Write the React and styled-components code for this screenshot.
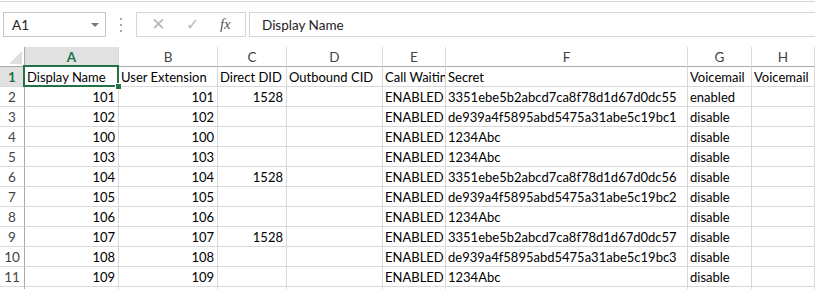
import React from 'react'
import styled, { createGlobalStyle } from 'styled-components'

const GlobalStyle = createGlobalStyle`
body {
  margin: 0;
  background: #ffffff;
  font-family: Lato, "Liberation Sans", Arial, sans-serif;
  overflow: hidden;
}
`

const Window = styled.div`
width: 815px;
height: 289px;
overflow: hidden;
background: #ffffff;
`

const FormulaRow = styled.div`
margin-top: 1px;
border-top: 1px solid #d5d5d5;
height: 46px;
display: flex;
align-items: flex-start;
padding-top: 10px;
box-sizing: border-box;
`

const NameBox = styled.div`
margin-left: 3px;
width: 103px;
height: 25px;
box-sizing: border-box;
border: 1px solid #c6c6c6;
display: flex;
align-items: center;
justify-content: space-between;
padding: 0 6px 0 8px;
font-size: 13.5px;
color: #222;
`

const DropArrow = styled.span`
width: 0;
height: 0;
border-left: 4px solid transparent;
border-right: 4px solid transparent;
border-top: 4px solid #777;
`

const Dots = styled.div`
width: 30px;
display: flex;
flex-direction: column;
align-items: center;
justify-content: center;
gap: 4px;
height: 25px;
`

const Dot = styled.span`
width: 2px;
height: 2px;
background: #a8a8a8;
`

const ButtonBox = styled.div`
width: 110px;
height: 25px;
box-sizing: border-box;
border: 1px solid #d5d5d5;
display: flex;
align-items: center;
justify-content: space-around;
padding: 0 4px;
`

const ToolIcon = styled.span`
font-size: ${p => p.$size || 15}px;
color: ${p => p.$color || '#b8b8b8'};
font-family: ${p => p.$serif ? '"Liberation Serif", serif' : '"DejaVu Sans", sans-serif'};
font-style: ${p => p.$serif ? 'italic' : 'normal'};
line-height: 1;
`

const FormulaInput = styled.div`
margin-left: 3px;
flex: 1;
height: 25px;
box-sizing: border-box;
border: 1px solid #d5d5d5;
border-right: none;
display: flex;
align-items: center;
padding-left: 12px;
font-size: 13.5px;
color: #222;
`

const Grid = styled.div`
display: grid;
grid-template-columns: 25px 94px 99px 69px 96px 63px 242px 64px 1fr;
grid-auto-rows: 20px;
`

const Cell = styled.div`
box-sizing: border-box;
border-right: 1px solid #d9d9d9;
border-bottom: 1px solid #d9d9d9;
font-size: 13px;
line-height: 20px;
color: #000;
padding: 0 3px 0 2px;
white-space: nowrap;
overflow: ${p => p.$spill ? 'visible' : 'hidden'};
text-align: ${p => p.$right ? 'right' : 'left'};
position: relative;
z-index: ${p => p.$spill ? 1 : 0};
`

const ActiveCell = styled(Cell)`
overflow: visible;
z-index: 2;
&::after {
  content: "";
  position: absolute;
  left: -2px;
  top: -2px;
  right: -1px;
  bottom: -1px;
  border: 2px solid #217346;
}
`

const FillHandle = styled.span`
position: absolute;
right: -4px;
bottom: -4px;
width: 5px;
height: 5px;
background: #217346;
border: 1px solid #ffffff;
z-index: 3;
`

const ColHeader = styled.div`
box-sizing: border-box;
border-right: 1px solid #dadada;
border-bottom: 1px solid #ababab;
background: ${p => p.$active ? '#e1e1e1' : '#ffffff'};
color: ${p => p.$active ? '#217346' : '#444'};
font-weight: ${p => p.$active ? 'bold' : 'normal'};
font-size: 13.5px;
line-height: 21px;
text-align: center;
`

const Corner = styled(ColHeader)`
position: relative;
border-right: 1px solid #ababab;
&::after {
  content: "";
  position: absolute;
  right: 2px;
  bottom: 2px;
  width: 0;
  height: 0;
  border-left: 13px solid transparent;
  border-bottom: 13px solid #dfdfdf;
}
`

const RowHeader = styled.div`
box-sizing: border-box;
border-right: 1px solid #ababab;
border-bottom: 1px solid #dadada;
background: ${p => p.$active ? '#e1e1e1' : '#ffffff'};
color: ${p => p.$active ? '#217346' : '#444'};
font-weight: ${p => p.$active ? 'bold' : 'normal'};
font-size: 13.5px;
line-height: 20px;
text-align: center;
`

const columns = ['A', 'B', 'C', 'D', 'E', 'F', 'G', 'H']
const headings = ['Display Name', 'User Extension', 'Direct DID', 'Outbound CID', 'Call Waiting', 'Secret', 'Voicemail', 'Voicemail']

const rows = [
  ['101', '101', '1528', '', 'ENABLED', '3351ebe5b2abcd7ca8f78d1d67d0dc55', 'enabled'],
  ['102', '102', '', '', 'ENABLED', 'de939a4f5895abd5475a31abe5c19bc1', 'disable'],
  ['100', '100', '', '', 'ENABLED', '1234Abc', 'disable'],
  ['103', '103', '', '', 'ENABLED', '1234Abc', 'disable'],
  ['104', '104', '1528', '', 'ENABLED', '3351ebe5b2abcd7ca8f78d1d67d0dc56', 'disable'],
  ['105', '105', '', '', 'ENABLED', 'de939a4f5895abd5475a31abe5c19bc2', 'disable'],
  ['106', '106', '', '', 'ENABLED', '1234Abc', 'disable'],
  ['107', '107', '1528', '', 'ENABLED', '3351ebe5b2abcd7ca8f78d1d67d0dc57', 'disable'],
  ['108', '108', '', '', 'ENABLED', 'de939a4f5895abd5475a31abe5c19bc3', 'disable'],
  ['109', '109', '', '', 'ENABLED', '1234Abc', 'disable'],
  ['', '', '', '', '', '', ''],
]

// numeric columns are right aligned like excel does
const rightCols = [0, 1, 2]

export default function App() {
  return (
    <Window>
      <GlobalStyle />
      <FormulaRow>
        <NameBox>A1<DropArrow /></NameBox>
        <Dots><Dot /><Dot /><Dot /></Dots>
        <ButtonBox>
          <ToolIcon $size={17}>✕</ToolIcon>
          <ToolIcon $size={16}>✓</ToolIcon>
          <ToolIcon $serif $size={15} $color="#555">fx</ToolIcon>
        </ButtonBox>
        <FormulaInput>Display Name</FormulaInput>
      </FormulaRow>

      <Grid>
        <Corner />
        {columns.map((c, i) => (
          <ColHeader key={c} $active={i === 0}>{c}</ColHeader>
        ))}

        <RowHeader $active>1</RowHeader>
        {headings.map((h, i) => i === 0
          ? <ActiveCell key={i}>{h}<FillHandle /></ActiveCell>
          : <Cell key={i} $spill={i === 7}>{h}</Cell>
        )}

        {rows.map((r, ri) => (
          <React.Fragment key={ri}>
            <RowHeader>{ri + 2}</RowHeader>
            {r.map((v, ci) => (
              <Cell key={ci} $right={rightCols.includes(ci)}>{v}</Cell>
            ))}
            <Cell />
          </React.Fragment>
        ))}
      </Grid>
    </Window>
  )
}
